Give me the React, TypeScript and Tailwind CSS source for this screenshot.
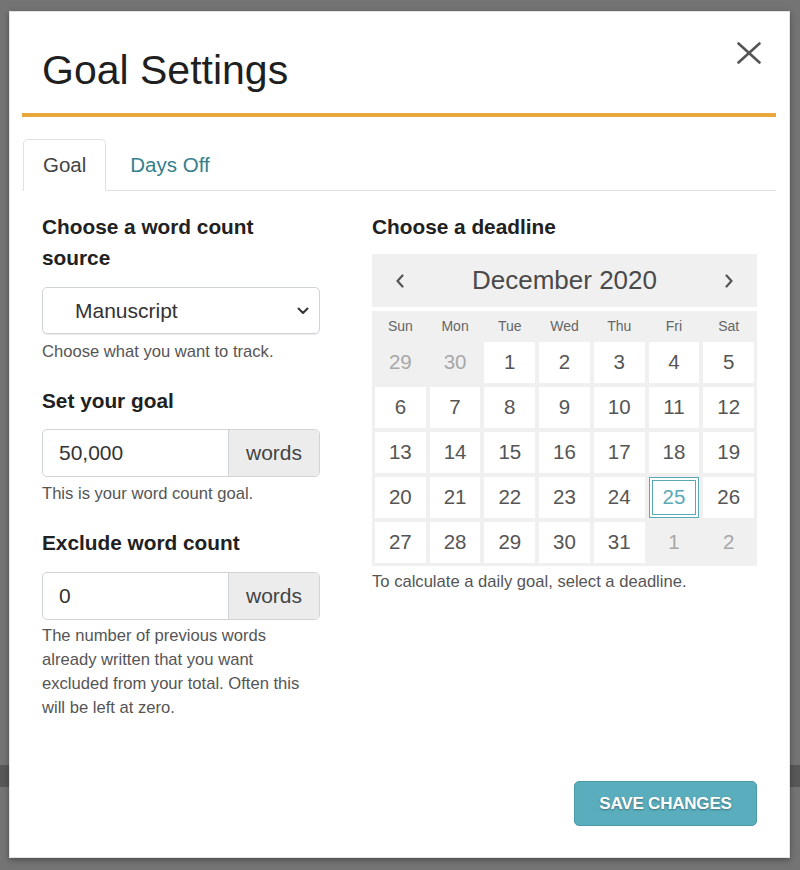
const font = { fontFamily: '"Liberation Sans", Arial, sans-serif' }

const weeks: { d: number; out?: boolean; sel?: boolean }[][] = [
  [{ d: 29, out: true }, { d: 30, out: true }, { d: 1 }, { d: 2 }, { d: 3 }, { d: 4 }, { d: 5 }],
  [{ d: 6 }, { d: 7 }, { d: 8 }, { d: 9 }, { d: 10 }, { d: 11 }, { d: 12 }],
  [{ d: 13 }, { d: 14 }, { d: 15 }, { d: 16 }, { d: 17 }, { d: 18 }, { d: 19 }],
  [{ d: 20 }, { d: 21 }, { d: 22 }, { d: 23 }, { d: 24 }, { d: 25, sel: true }, { d: 26 }],
  [{ d: 27 }, { d: 28 }, { d: 29 }, { d: 30 }, { d: 31 }, { d: 1, out: true }, { d: 2, out: true }],
]

const dayNames = ['Sun', 'Mon', 'Tue', 'Wed', 'Thu', 'Fri', 'Sat']

function WordsInput({ value }: { value: string }) {
  return (
    <div className="flex h-[48px] w-[278px] rounded-[5px] border border-[#cfd4d9] overflow-hidden">
      <div className="flex-1 flex items-center pl-[16px] text-[21px] text-[#333]">{value}</div>
      <div className="w-[91px] flex items-center justify-center bg-[#ececec] border-l border-[#cfd4d9] text-[21px] text-[#444]">
        words
      </div>
    </div>
  )
}

function Calendar() {
  return (
    <div className="mt-[12px] w-[385px]">
      <div className="h-[53px] bg-[#f0f0f0] grid grid-cols-7 gap-x-[4px] px-[3px] items-center text-[#4a4a4a]">
        <div className="flex justify-center">
          <svg width="10" height="14" viewBox="0 0 10 14" fill="none">
            <path d="M7.5 1.5L2.5 7l5 5.5" stroke="#555" strokeWidth="2.2" strokeLinecap="round" strokeLinejoin="round" />
          </svg>
        </div>
        <div className="col-span-5 text-center text-[26px]">December 2020</div>
        <div className="flex justify-center">
          <svg width="10" height="14" viewBox="0 0 10 14" fill="none">
            <path d="M2.5 1.5L7.5 7l-5 5.5" stroke="#555" strokeWidth="2.2" strokeLinecap="round" strokeLinejoin="round" />
          </svg>
        </div>
      </div>

      <div className="mt-[4px] bg-[#f0f0f0] p-[3px] grid grid-cols-7 gap-[4px]">
        {dayNames.map((n) => (
          <div key={n} className="h-[24px] flex items-center justify-center text-[14px] text-[#666]">
            {n}
          </div>
        ))}
        {weeks.flat().map((c, i) => (
          <div
            key={i}
            className={
              c.out
                ? 'h-[41px] flex items-center justify-center text-[20.5px] text-[#a8a8a8]'
                : c.sel
                  ? 'h-[41px] flex items-center justify-center text-[20.5px] text-[#5aa9b6] bg-white border border-[#5aa9b6] shadow-[inset_0_0_0_2px_#fff,inset_0_0_0_3px_#5aa9b6]'
                  : 'h-[41px] flex items-center justify-center text-[20.5px] text-[#555] bg-white'
            }
          >
            {c.d}
          </div>
        ))}
      </div>
      <p className="mt-[4px] text-[16.6px] leading-[24px] text-[#555]">
        To calculate a daily goal, select a deadline.
      </p>
    </div>
  )
}

export default function App() {
  return (
    <div className="relative w-[800px] h-[870px] bg-[#747474] overflow-hidden" style={font}>
      <div className="mt-[765px] h-[22px] bg-[#585858]" />

      <div className="absolute left-[9px] top-[11px] w-[781px] h-[847px] bg-white flex flex-col border border-[#e4e4e4] shadow-[0_2px_6px_rgba(0,0,0,0.35)]">
        <div className="ml-[12px] mr-[13px] pt-[34px] pb-[19px] pl-[20px] pr-[15px] border-b-[4px] border-[#e9a83b] flex items-start justify-between">
          <h1 className="text-[41px] leading-[48px] text-[#1f1f1f]">Goal Settings</h1>
          <svg className="-mt-[4px]" width="24" height="22" viewBox="0 0 24 22" fill="none">
            <path d="M1.5 1.5l21 19M22.5 1.5l-21 19" stroke="#555" strokeWidth="2.6" strokeLinecap="round" />
          </svg>
        </div>

        <div className="ml-[12px] mr-[13px] mt-[22px] flex border-b border-[#dee2e6]">
          <div className="h-[52px] -mb-px ml-[1px] px-[19px] flex items-center rounded-t-[5px] border border-[#dee2e6] border-b-white bg-white text-[20.5px] text-[#444]">
            Goal
          </div>
          <div className="h-[52px] -mb-px ml-[4px] px-[19px] flex items-center border border-transparent text-[20.5px] text-[#347f8c]">
            Days Off
          </div>
        </div>

        <div className="flex pl-[32px] pt-[20px]">
          <div className="w-[278px]">
            <h3 className="text-[20.8px] leading-[31px] font-bold text-[#212121]">Choose a word count source</h3>
            <div className="mt-[14px] h-[47px] rounded-[5px] border border-[#cfd4d9] shadow-[0_1px_1px_rgba(0,0,0,0.08)] flex items-center justify-between pl-[32px] pr-[10px] text-[21px] text-[#333]">
              <span>Manuscript</span>
              <svg width="12" height="8" viewBox="0 0 12 8" fill="none">
                <path d="M1.5 1.5L6 6l4.5-4.5" stroke="#333" strokeWidth="2" strokeLinecap="round" strokeLinejoin="round" />
              </svg>
            </div>
            <p className="mt-[6px] text-[16.6px] leading-[24px] text-[#555]">Choose what you want to track.</p>

            <h3 className="mt-[21px] text-[20.8px] leading-[31px] font-bold text-[#212121]">Set your goal</h3>
            <div className="mt-[13px]">
              <WordsInput value="50,000" />
            </div>
            <p className="mt-[5px] text-[16.6px] leading-[24px] text-[#555]">This is your word count goal.</p>

            <h3 className="mt-[21px] text-[20.8px] leading-[31px] font-bold text-[#212121]">Exclude word count</h3>
            <div className="mt-[14px]">
              <WordsInput value="0" />
            </div>
            <p className="mt-[4px] w-[268px] text-[16.6px] leading-[24px] text-[#555]">
              The number of previous words already written that you want excluded from your total. Often this will be
              left at zero.
            </p>
          </div>

          <div className="ml-[52px]">
            <h3 className="text-[20.8px] leading-[31px] font-bold text-[#212121]">Choose a deadline</h3>
            <Calendar />
          </div>
        </div>

        <div className="mt-auto flex justify-end pr-[32px] pb-[31px]">
          <button className="w-[183px] h-[45px] rounded-[5px] bg-[#5aadbc] border border-[#4b9aa7] text-white text-[17px] font-bold tracking-[-0.2px] [text-shadow:0_1px_2px_rgba(0,0,0,0.35)]">
            SAVE CHANGES
          </button>
        </div>
      </div>
    </div>
  )
}
